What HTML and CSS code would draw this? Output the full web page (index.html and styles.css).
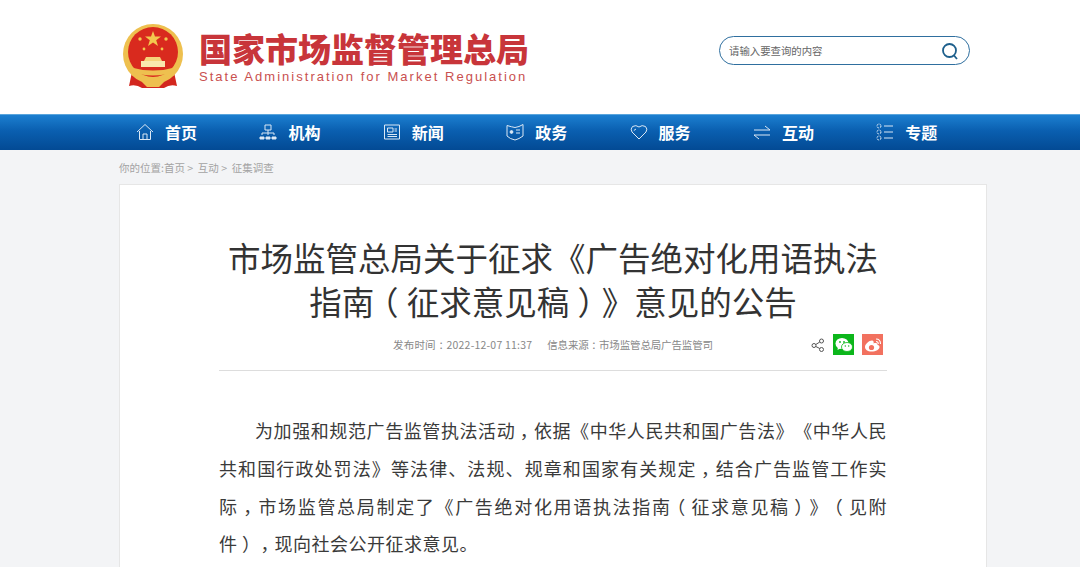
FILE: index.html
```html
<!DOCTYPE html>
<html>
<head>
  <meta charset="utf-8">
  <title>市场监管总局关于征求《广告绝对化用语执法指南（征求意见稿）》意见的公告</title>
  <link rel="stylesheet" href="styles.css">
</head>
<body>

<div class="header">
  <div class="logo">
    <svg class="emblem" width="62" height="66" viewBox="0 0 62 66">
      <path d="M10 48 L7 62 Q14 60 20 64 H42 Q48 60 55 62 L52 48 Z" fill="#d3261e"/>
      <circle cx="31" cy="30" r="30" fill="#eec04f"/>
      <circle cx="31" cy="28" r="25" fill="#d92a1e"/>
      <path d="M31 7 l2 5.6 6 0 -4.8 3.6 1.8 5.8 -5 -3.5 -5 3.5 1.8 -5.8 -4.8 -3.6 6 0z" fill="#f3c84e"/>
      <circle cx="18" cy="15" r="1.7" fill="#f3c84e"/>
      <circle cx="44" cy="15" r="1.7" fill="#f3c84e"/>
      <circle cx="22" cy="25" r="1.4" fill="#f3c84e"/>
      <circle cx="40" cy="25" r="1.4" fill="#f3c84e"/>
      <path d="M24 33 h14 l2 4 h-18z" fill="#f6d37a"/>
      <path d="M19 37 h24 v6 h-24z" fill="#f9e7ad"/>
      <path d="M7 43 Q31 50 55 43 L55 47 Q31 56 7 47Z" fill="#eec04f"/>
      <path d="M20 58 Q25 52 31 56 Q37 52 42 58 L37 63 H25Z" fill="#eec04f"/>
    </svg>
    <div class="logo-text">
      <div class="logo-cn">国家市场监督管理总局</div>
      <div class="logo-en">State Administration for Market Regulation</div>
    </div>
  </div>
  <div class="search">
    <span class="search-text">请输入要查询的内容</span>
    <svg width="20" height="20" viewBox="0 0 20 20" fill="none" stroke="#1d5f8c" stroke-width="1.8">
      <circle cx="9.5" cy="9.5" r="6.5"/>
      <path d="M14 14.5 L17 18"/>
    </svg>
  </div>
</div>

<div class="nav">
  <a class="nav-item">
    <svg width="20" height="20" viewBox="0 0 20 20" fill="none" stroke="#dbe8f5"><path d="M2 10 L10 2.5 L18 10 M4.5 9 V17.5 H15.5 V9 M8 17.5 V12 H12 V17.5"/></svg>
    首页
  </a>
  <a class="nav-item">
    <svg width="20" height="20" viewBox="0 0 20 20" fill="none" stroke="#dbe8f5"><path d="M7 3 H13 V8 H7Z M10 8 V11 M4 11 H16 M4 11 V13 M10 11 V13 M16 11 V13"/><path d="M2 15 H6 V17 H2Z M8 15 H12 V17 H8Z M14 15 H18 V17 H14Z" fill="#dbe8f5"/></svg>
    机构
  </a>
  <a class="nav-item">
    <svg width="20" height="20" viewBox="0 0 20 20" fill="none" stroke="#dbe8f5"><path d="M2.5 3 H17.5 V17 H2.5Z M5.5 6 H11 V10 H5.5Z M12.5 7 H15 M12.5 9 H15 M5.5 12.5 H15 M5.5 14.5 H15"/></svg>
    新闻
  </a>
  <a class="nav-item">
    <svg width="20" height="20" viewBox="0 0 20 20" fill="none" stroke="#dbe8f5"><path d="M2 3.5 Q7 5 10 5.5 Q14 5 18 2.5 V14 Q14 17 10 18 Q5 17 2 14Z M11 8 H15 M11 11 H15"/><circle cx="6.5" cy="10" r="1.4" fill="#dbe8f5"/></svg>
    政务
  </a>
  <a class="nav-item">
    <svg width="20" height="20" viewBox="0 0 20 20" fill="none" stroke="#dbe8f5"><path d="M10 17 L3 10 Q1 7 3.5 4.5 Q7 2.5 10 5 Q13 2.5 16.5 4.5 Q19 7 17 10Z M7 7 L4.8 8.5"/></svg>
    服务
  </a>
  <a class="nav-item">
    <svg width="20" height="20" viewBox="0 0 20 20" fill="none" stroke="#dbe8f5"><path d="M2 8 H18 L13 4 M18 13 H2 L7 17"/></svg>
    互动
  </a>
  <a class="nav-item">
    <svg width="20" height="20" viewBox="0 0 20 20" fill="none" stroke="#dbe8f5"><path d="M9 4 H18 M9 10 H18 M9 16 H18" /><circle cx="4" cy="4" r="2" stroke-dasharray="2 1"/><circle cx="4" cy="10" r="2" stroke-dasharray="2 1"/><circle cx="4" cy="16" r="2" stroke-dasharray="2 1"/></svg>
    专题
  </a>
</div>

<div class="main">
  <div class="crumbs">你的位置:首页 &gt;&nbsp; 互动 &gt;&nbsp; 征集调查</div>
  <div class="card">
    <h1>市场监管总局关于征求《广告绝对化用语执法指南<span class="mid">（</span>征求意见稿<span class="mid">）</span>》意见的公告</h1>
    <div class="meta">
      <span class="meta-text meta-time">发布时间<span class="mid">：</span>2022-12-07 11:37</span>
      <span class="meta-text meta-source">信息来源<span class="mid">：</span>市场监管总局广告监管司</span>
      <div class="share">
        <svg width="14" height="14" viewBox="0 0 14 14" fill="none" stroke="#555" stroke-width="1"><circle cx="3" cy="7.5" r="2"/><circle cx="10.5" cy="3" r="2"/><circle cx="10.5" cy="11.5" r="2"/><path d="M4.8 6.5 L8.8 4 M4.8 8.5 L8.8 10.5"/></svg>
        <span class="share-btn wechat">
          <svg width="18" height="16" viewBox="0 0 18 16"><ellipse cx="7" cy="6.5" rx="6.5" ry="5.5" fill="#fff"/><path d="M3 10 L2.5 13 L6 11Z" fill="#fff"/><ellipse cx="12" cy="10" rx="5.5" ry="4.5" fill="#fff" stroke="#0cb61b" stroke-width=".8"/><circle cx="5" cy="5" r=".9" fill="#0cb61b"/><circle cx="9" cy="5" r=".9" fill="#0cb61b"/><circle cx="10.3" cy="9" r=".7" fill="#0cb61b"/><circle cx="13.7" cy="9" r=".7" fill="#0cb61b"/></svg>
        </span>
        <span class="share-btn weibo">
          <svg width="18" height="16" viewBox="0 0 18 16"><path d="M7.5 14.5 C3.5 14.5 1 12.5 1 10 C1 7 5 3.5 8 3.5 C9.5 3.5 10 5 9.5 6.5 C11.5 5.7 13.5 6 13.5 7.7 C15 8.2 15.5 9 15.5 10 C15.5 12.5 12 14.5 7.5 14.5Z" fill="#fff"/><circle cx="7.5" cy="10.5" r="2.6" fill="#f2715f"/><path d="M12 2 Q16.5 2 16.5 7 M12 4.5 Q14.3 4.5 14.3 7" fill="none" stroke="#fff" stroke-width="1.1"/></svg>
        </span>
      </div>
    </div>
    <p class="content">为加强和规范广告监管执法活动<span class="mid">，</span>依据《中华人民共和国广告法》《中华人民共和国行政处罚法》等法律、法规、规章和国家有关规定<span class="mid">，</span>结合广告监管工作实际<span class="mid">，</span>市场监管总局制定了《广告绝对化用语执法指南<span class="mid">（</span>征求意见稿<span class="mid">）</span>》<span class="mid">（</span>见附件<span class="mid">）</span><span class="mid">，</span>现向社会公开征求意见。</p>
  </div>
</div>

</body>
</html>
```

FILE: styles.css
```css
* {
  box-sizing: border-box;
}

html, body {
  height: 567px;
  overflow: hidden;
}

body {
  margin: 0;
  background: #f3f4f6;
  font-family: "Noto Sans CJK SC", "Liberation Sans", sans-serif;
  color: #333;
  text-spacing-trim: space-all;
}

/* punctuation that sits in the middle of its cell */
.mid {
  font-feature-settings: "halt";
  padding: 0 0.25em;
}

.header {
  height: 114px;
  background: #fff;
  display: flex;
  justify-content: space-between;
  padding: 24px 110px 0 122px;
}

.logo {
  display: flex;
  gap: 15px;
  align-items: flex-start;
}

.logo-text {
  padding-top: 5px;
}

.logo-cn {
  font-size: 33px;
  line-height: 38px;
  font-weight: 900;
  color: #c8353a;
  white-space: nowrap;
}

.logo-en {
  font-family: "Liberation Sans", sans-serif;
  font-size: 13px;
  line-height: 14px;
  color: #c9504f;
  letter-spacing: 2.02px;
  white-space: nowrap;
  margin-top: 3px;
}

.search {
  width: 251px;
  height: 29px;
  margin-top: 12px;
  border: 1px solid #2f6f9f;
  border-radius: 15px;
  display: flex;
  align-items: center;
  justify-content: space-between;
  padding: 0 9px;
}

.search-text {
  font-size: 10.4px;
  color: #666;
}

.nav {
  height: 36px;
  background: linear-gradient(#1c7fd0, #0a5fb0 45%, #034a94);
  border-top: 1px solid #5aa5dc;
  display: flex;
  padding: 0 0 2px 135px;
}

.nav-item {
  width: 123.4px;
  display: flex;
  align-items: center;
  gap: 10px;
  color: #fff;
  font-size: 16px;
  font-weight: 700;
}

.main {
  width: 868px;
  margin-left: 119px;
}

.crumbs {
  height: 34px;
  line-height: 35px;
  font-size: 10.5px;
  color: #a3a3a3;
}

.card {
  background: #fff;
  border: 1px solid #e6e6e6;
  padding: 0 99px;
  height: 400px;
}

h1 {
  margin: 50px 0 0;
  font-size: 32.5px;
  line-height: 44px;
  font-weight: 400;
  color: #333;
  text-align: center;
}

.meta {
  height: 44px;
  margin-top: 4px;
  border-bottom: 1px solid #ddd;
  display: flex;
  align-items: center;
  padding: 0 4px 8px 174px;
}

.meta-text {
  font-size: 10.5px;
  color: #888;
  white-space: nowrap;
}

.meta-time {
  letter-spacing: 0.2px;
}

.meta-source {
  margin-left: 15px;
  letter-spacing: -0.15px;
}

.share {
  margin-left: auto;
  display: flex;
  align-items: center;
  gap: 8px;
}

.share-btn {
  width: 21px;
  height: 21px;
  display: flex;
  align-items: center;
  justify-content: center;
}

.wechat {
  background: #0cb61b;
}

.weibo {
  background: #f2715f;
}

.content {
  margin: 41px 0 0;
  font-size: 18px;
  line-height: 37.8px;
  letter-spacing: 0.5px;
  color: #3a3a3a;
  text-indent: 36px;
  text-align: justify;
}
```
